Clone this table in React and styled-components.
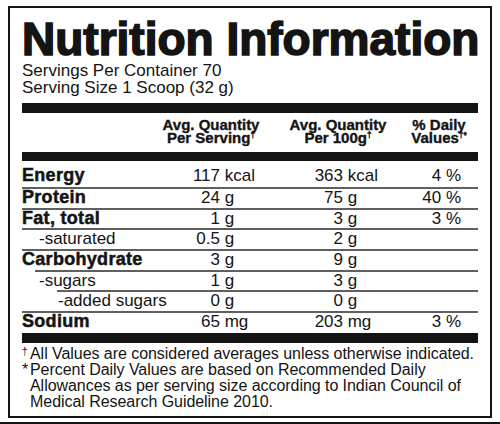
import React from 'react';
import styled, { createGlobalStyle } from 'styled-components';

const Global = createGlobalStyle`
  html, body { margin: 0; padding: 0; background: #fff; }
  body { font-family: "Liberation Sans", Arial, Helvetica, sans-serif; color: #141414; }
  #root { width: 500px; height: 424px; }
`;

const Page = styled.div`
  width: 500px;
  height: 424px;
  display: flex;
  flex-direction: column;
  overflow: hidden;
  background: #fff;
`;

const Panel = styled.section`
  margin: 6px 0 0 8px;
  width: 484px;
  height: 412px;
  box-sizing: border-box;
  border: 2px solid #161616;
  padding: 8px 12px 0 12px;
  display: flex;
  flex-direction: column;
`;

const Title = styled.h1`
  margin: 0;
  font-size: 46px;
  line-height: 46px;
  font-weight: 700;
  white-space: nowrap;
  -webkit-text-stroke: 1.6px #141414;
`;

const Servings = styled.div`
  font-size: 17px;
  line-height: 17px;
  white-space: nowrap;
`;

const Bar = styled.div`
  height: ${p => p.$h}px;
  margin-top: ${p => p.$mt}px;
  background: #141414;
  flex-shrink: 0;
`;

const HeadGrid = styled.div`
  margin-top: 5px;
  display: grid;
  grid-template-columns: 139px 100px 27px 100px 13px 76px;
  font-size: 15px;
  line-height: 13px;
  font-weight: 700;
  -webkit-text-stroke: 0.35px #141414;
`;

const HeadCell = styled.div`
  grid-column: ${p => p.$col};
  display: flex;
  flex-direction: column;
  align-items: center;
  white-space: nowrap;
`;

const HeadLine = styled.span`
  display: block;
  height: 13px;
`;

const Sup = styled.sup`
  font-size: 0.55em;
  line-height: 0;
  vertical-align: 0.6em;
`;

const Rows = styled.div`
  display: flex;
  flex-direction: column;
`;

const Row = styled.div`
  display: grid;
  grid-template-columns: ${p => 150 - p.$lineIndent}px 48px 75px 48px 59px 59px 1fr;
  margin-left: ${p => p.$lineIndent}px;
  border-top: ${p => (p.$first ? 'none' : '2px solid #5f5f5f')};
  padding: ${p => (p.$first ? '6px 0 3px' : '0 0 1.67px')};
  font-size: 17px;
  line-height: 17px;
`;

const RowLabel = styled.div`
  padding-left: ${p => p.$pad}px;
  white-space: nowrap;
  font-weight: ${p => (p.$bold ? 700 : 400)};
  font-size: ${p => (p.$bold ? '18px' : '17px')};
  letter-spacing: ${p => (p.$bold ? '0.3px' : '0')};
  -webkit-text-stroke: ${p => (p.$bold ? '0.5px #141414' : '0')};
`;

const Num = styled.div`
  text-align: right;
  white-space: nowrap;
`;

const Unit = styled.div`
  padding-left: 4.7px;
  white-space: nowrap;
`;

const Pct = styled.div`
  grid-column: 6;
  text-align: right;
  white-space: nowrap;
`;

const Notes = styled.div`
  margin-top: 3px;
  font-size: 16px;
  line-height: 16px;
  letter-spacing: -0.05px;
`;

const Note = styled.p`
  margin: 0;
  display: grid;
  grid-template-columns: 8px 1fr;
  white-space: nowrap;
`;

const Mark = styled.span`
  font-size: ${p => (p.$small ? '10px' : '16px')};
  line-height: ${p => (p.$small ? '12px' : '16px')};
`;

const BottomRule = styled.div`
  height: 2px;
  margin-top: 4px;
  background: #141414;
`;

const rows = [
  { label: 'Energy', bold: true, v1: ['117', 'kcal'], v2: ['363', 'kcal'], pct: '4 %', first: true },
  { label: 'Protein', bold: true, v1: ['24', 'g'], v2: ['75', 'g'], pct: '40 %' },
  { label: 'Fat, total', bold: true, v1: ['1', 'g'], v2: ['3', 'g'], pct: '3 %' },
  { label: '-saturated', indent: 17, v1: ['0.5', 'g'], v2: ['2', 'g'] },
  { label: 'Carbohydrate', bold: true, v1: ['3', 'g'], v2: ['9', 'g'] },
  { label: '-sugars', indent: 17, lineIndent: 13, v1: ['1', 'g'], v2: ['3', 'g'] },
  { label: '-added sugars', indent: 36, lineIndent: 35, v1: ['0', 'g'], v2: ['0', 'g'] },
  { label: 'Sodium', bold: true, v1: ['65', 'mg'], v2: ['203', 'mg'], pct: '3 %' },
];

const heads = [
  { col: 2, top: 'Avg. Quantity', bottom: 'Per Serving', sup: '†' },
  { col: 4, top: 'Avg. Quantity', bottom: 'Per 100g', sup: '†' },
  { col: 6, top: '% Daily', bottom: 'Values', sup: '†*' },
];

export default function App() {
  return (
    <Page>
      <Global />
      <Panel>
        <Title>Nutrition Information</Title>
        <Servings>Servings Per Container 70</Servings>
        <Servings>Serving Size 1 Scoop (32 g)</Servings>
        <Bar $h={10} $mt={7} />
        <HeadGrid>
          {heads.map(h => (
            <HeadCell key={h.col} $col={h.col}>
              <HeadLine>{h.top}</HeadLine>
              <HeadLine>
                {h.bottom}
                <Sup>{h.sup}</Sup>
              </HeadLine>
            </HeadCell>
          ))}
        </HeadGrid>
        <Bar $h={9} $mt={8} />
        <Rows>
          {rows.map(r => {
            const li = r.lineIndent || 0;
            return (
              <Row key={r.label} $first={r.first} $lineIndent={li}>
                <RowLabel $bold={r.bold} $pad={(r.indent || 0) - li}>{r.label}</RowLabel>
                <Num>{r.v1[0]}</Num>
                <Unit>{r.v1[1]}</Unit>
                <Num>{r.v2[0]}</Num>
                <Unit>{r.v2[1]}</Unit>
                <Pct>{r.pct || ''}</Pct>
              </Row>
            );
          })}
        </Rows>
        <Bar $h={10} $mt={1} />
        <Notes>
          <Note>
            <Mark $small>†</Mark>
            <span>All Values are considered averages unless otherwise indicated.</span>
          </Note>
          <Note>
            <Mark>*</Mark>
            <span>
              Percent Daily Values are based on Recommended Daily<br />
              Allowances as per serving size according to Indian Council of<br />
              Medical Research Guideline 2010.
            </span>
          </Note>
        </Notes>
      </Panel>
      <BottomRule />
    </Page>
  );
}
